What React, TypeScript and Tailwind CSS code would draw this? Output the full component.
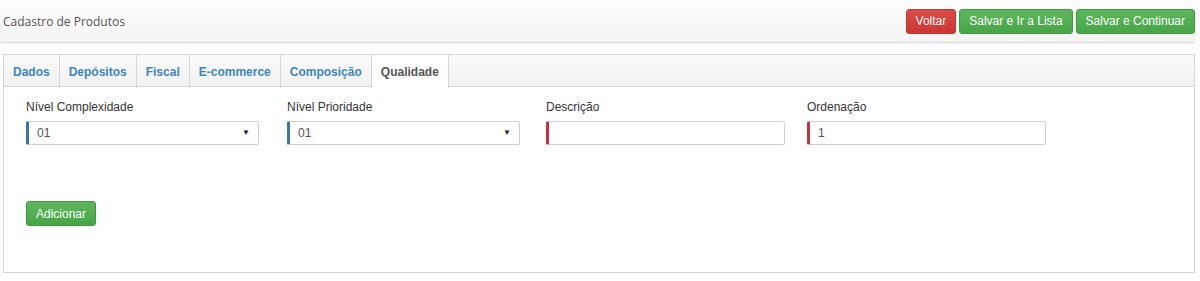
import React, { useState } from 'react';

const tabs = ['Dados', 'Depósitos', 'Fiscal', 'E-commerce', 'Composição', 'Qualidade'];

const App: React.FC = () => {
    const [activeTab, setActiveTab] = useState<string>('Qualidade');

    return (
        <div className="w-[1200px] h-[281px] bg-white font-['Liberation_Sans',Arial,sans-serif] text-[12px] text-[#333]">
            {/* Header */}
            <div className="mr-[5px] h-[43px] flex items-center justify-between border-b border-[#dcdcdc] bg-gradient-to-b from-[#ffffff] to-[#f3f3f3] shadow-[0_1px_2px_rgba(0,0,0,0.06)]">
                <span className="pl-[3px] pt-[2px] font-['Open_Sans',sans-serif] text-[12px] text-[#555]">Cadastro de Produtos</span>
                <div className="flex items-center gap-[3px]">
                    <Btn color="red">Voltar</Btn>
                    <Btn color="green">Salvar e Ir a Lista</Btn>
                    <Btn color="green">Salvar e Continuar</Btn>
                </div>
            </div>

            {/* Tabs panel */}
            <div className="ml-[3px] mr-[5px] mt-[11px] h-[219px] border border-[#d6d6d6] border-t-0 bg-white flex flex-col">
                <div className="flex h-[33px] border-t border-b border-[#d6d6d6] bg-gradient-to-b from-[#fbfbfb] to-[#f1f1f1]">
                    {tabs.map((t) => (
                        <button
                            key={t}
                            onClick={() => setActiveTab(t)}
                            className={`px-[9px] h-[33px] -mb-px border-r border-[#d6d6d6] font-bold text-[12px] ${
                                activeTab === t ? 'bg-white text-[#555]' : 'text-[#3b86c4]'
                            }`}
                        >
                            {t}
                        </button>
                    ))}
                </div>

                <div className="pt-[13px] pl-[22px]">
                    <div className="flex">
                        <Field label="Nível Complexidade" width="w-[233px]" accent="border-l-[#3f73a6]" value="01" select />
                        <Field label="Nível Prioridade" width="w-[233px] ml-[28px]" accent="border-l-[#3f73a6]" value="01" select />
                        <Field label="Descrição" width="w-[239px] ml-[26px]" accent="border-l-[#c9303f]" value="" />
                        <Field label="Ordenação" width="w-[239px] ml-[22px]" accent="border-l-[#c9303f]" value="1" />
                    </div>

                    <button className="mt-[56px] h-[25px] w-[70px] rounded-[3px] border border-[#3d9a3d] bg-gradient-to-b from-[#5cb85c] to-[#45a645] text-white text-[12px]">
                        Adicionar
                    </button>
                </div>
            </div>
        </div>
    );
};

const Btn = ({ color, children }: any) => (
    <button
        className={`h-[25px] px-[9px] rounded-[3px] border text-[12px] text-white ${
            color === 'red'
                ? 'border-[#c13a36] bg-gradient-to-b from-[#dd4b47] to-[#cc3531]'
                : 'border-[#3d9a3d] bg-gradient-to-b from-[#5cb85c] to-[#46a546]'
        }`}
    >
        {children}
    </button>
);

const Field = ({ label, width, accent, value, select }: any) => (
    <div className={`${width} flex flex-col`}>
        <label className="text-[12px] text-[#333] leading-[14px] mb-[7px]">{label}</label>
        <div className={`h-[24px] flex items-center justify-between border border-[#cfcfcf] border-l-[3px] ${accent} rounded-[2px] pl-[8px] pr-[8px] text-[12px] text-[#555] bg-white`}>
            <span>{value}</span>
            {select && <span className="text-[8px] text-[#222]">▼</span>}
        </div>
    </div>
);

export default App;
